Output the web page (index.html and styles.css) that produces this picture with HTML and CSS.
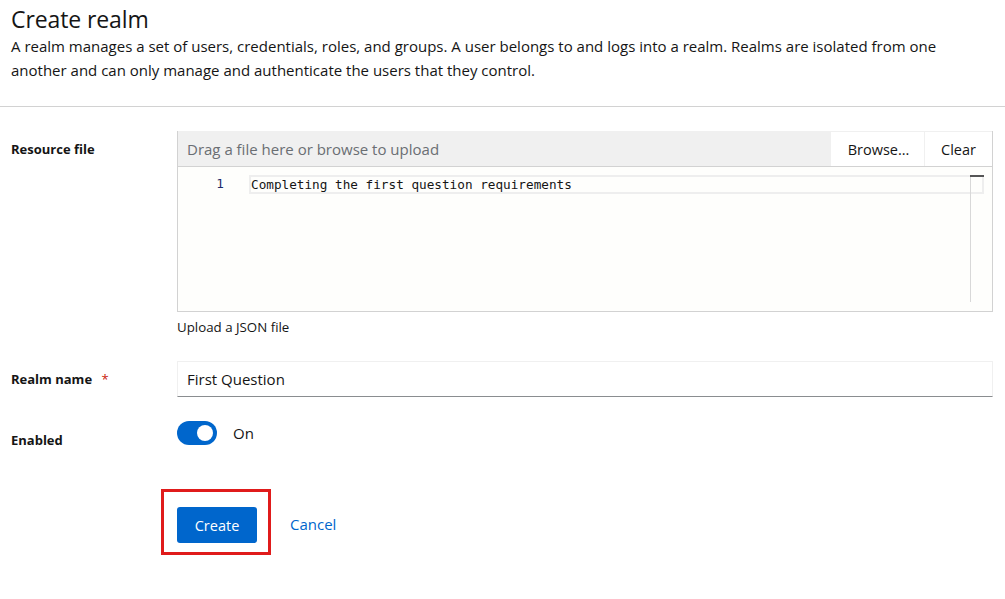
FILE: index.html
```html
<!DOCTYPE html>
<html>
<head>
<meta charset="utf-8">
<link rel="stylesheet" href="styles.css">
</head>
<body>
<header class="page-header">
  <h1 class="title">Create realm</h1>
  <p class="desc">A realm manages a set of users, credentials, roles, and groups. A user belongs to and logs into a realm. Realms are isolated from one another and can only manage and authenticate the users that they control.</p>
</header>
<form class="form">
  <div class="row row-file">
    <label class="label">Resource file</label>
    <div class="control">
      <div class="upload">
        <div class="upload-bar">
          <div class="upload-name">Drag a file here or browse to upload</div>
          <button type="button" class="ubtn ubtn-browse">Browse...</button>
          <button type="button" class="ubtn ubtn-clear">Clear</button>
        </div>
        <div class="editor">
          <div class="gutter">1</div>
          <div class="lines">
            <div class="line-current">Completing the first question requirements</div>
          </div>
          <div class="scrollbar"><div class="thumb"></div></div>
        </div>
      </div>
      <div class="helper">Upload a JSON file</div>
    </div>
  </div>
  <div class="row row-name">
    <label class="label">Realm name <span class="req">*</span></label>
    <div class="control">
      <div class="input">First Question</div>
    </div>
  </div>
  <div class="row row-enabled">
    <label class="label label-enabled">Enabled</label>
    <div class="control switch-wrap">
      <span class="switch"><span class="knob"></span></span>
      <span class="switch-text">On</span>
    </div>
  </div>
  <div class="row row-actions">
    <div class="label"></div>
    <div class="actions">
      <div class="highlight"><button type="button" class="btn-primary">Create</button></div>
      <a class="link">Cancel</a>
    </div>
  </div>
</form>
</body>
</html>
```
FILE: styles.css
```css
* { box-sizing: border-box; }
html, body { margin: 0; padding: 0; background: #fff; }
body { font-family: "Open Sans", "Liberation Sans", sans-serif; color: #151515; width: 1005px; height: 599px; overflow: hidden; }

.page-header { padding: 4px 11px 0 11px; height: 107px; border-bottom: 1px solid #d2d2d2; }
.title { margin: 0; font-size: 23px; font-weight: 400; line-height: 30px; letter-spacing: -0.1px; }
.desc { margin: 0; font-size: 15px; letter-spacing: 0; line-height: 24px; max-width: 950px; }

.form { padding: 24px 12px 0 11px; }
.row { display: flex; }
.label { width: 166px; flex: none; font-size: 13px; font-weight: 700; }
.control { flex: 1; }

.row-file .label { padding-top: 9px; }
.upload { border: 1px solid #d2d2d2; border-top: none; }
.upload-bar { display: flex; height: 36px; background: #f0f0f0; border-bottom: 1px solid #d2d2d2; border-top: 1px solid #f0f0f0; }
.upload-name { flex: 1; padding: 7px 9px; font-size: 15px; color: #6a6e73; }
.ubtn { font-family: inherit; font-size: 14.5px; color: #151515; background: #fff; border: none; border-left: 1px solid #f0f0f0; height: 34px; }
.ubtn-browse { width: 94px; padding: 0 0 0 2px; }
.ubtn-clear { width: 68px; padding: 0; }
.editor { height: 144px; background: #fefefc; display: flex; position: relative; padding-top: 8px; }
.gutter { width: 71px; flex: none; text-align: right; padding-right: 25px; font-family: "DejaVu Sans Mono", monospace; font-size: 12.7px; color: #1b2a6b; line-height: 18px; }
.lines { flex: 1; padding-right: 8px; }
.line-current { border: 2px solid #eeeeee; height: 19px; line-height: 15px; font-family: "DejaVu Sans Mono", monospace; font-size: 12.7px; white-space: pre; padding-left: 0; }
.scrollbar { position: absolute; right: 21px; top: 8px; width: 1px; height: 127px; background: #d8d8d8; }
.thumb { position: absolute; left: 0; top: 0; width: 14px; height: 2px; background: #555; }

.helper { font-size: 13.3px; margin-top: 6px; line-height: 18px; }

.row-name { margin-top: 25px; }
.row-name .label { padding-top: 9px; }
.req { color: #c9190b; margin-left: 6px; font-weight: 400; }
.input { height: 36px; border: 1px solid #f0f0f0; border-bottom: 1px solid #8a8d90; padding: 7px 9px; font-size: 15px; }

.row-enabled { margin-top: 24px; }
.label-enabled { padding-top: 10px; }
.switch-wrap { display: flex; align-items: flex-start; }
.switch { width: 40px; height: 24px; border-radius: 12px; background: #0066cc; position: relative; flex: none; }
.knob { position: absolute; right: 4px; top: 4px; width: 16px; height: 16px; border-radius: 50%; background: #fff; }
.switch-text { margin-left: 16px; font-size: 15px; line-height: 24px; margin-top: 0; }

.row-actions { margin-top: 40px; }
.row-actions .label { width: 150px; }
.actions { display: flex; align-items: center; }
.highlight { border: 3px solid #e01b1b; padding: 15px 11px 9px 13px; }
.btn-primary { width: 80px; height: 36px; background: #0066cc; color: #fff; border: none; border-radius: 3px; font-family: inherit; font-size: 14.5px; }
.link { color: #0066cc; font-size: 15px; margin-left: 19px; margin-top: 4px; }
```
